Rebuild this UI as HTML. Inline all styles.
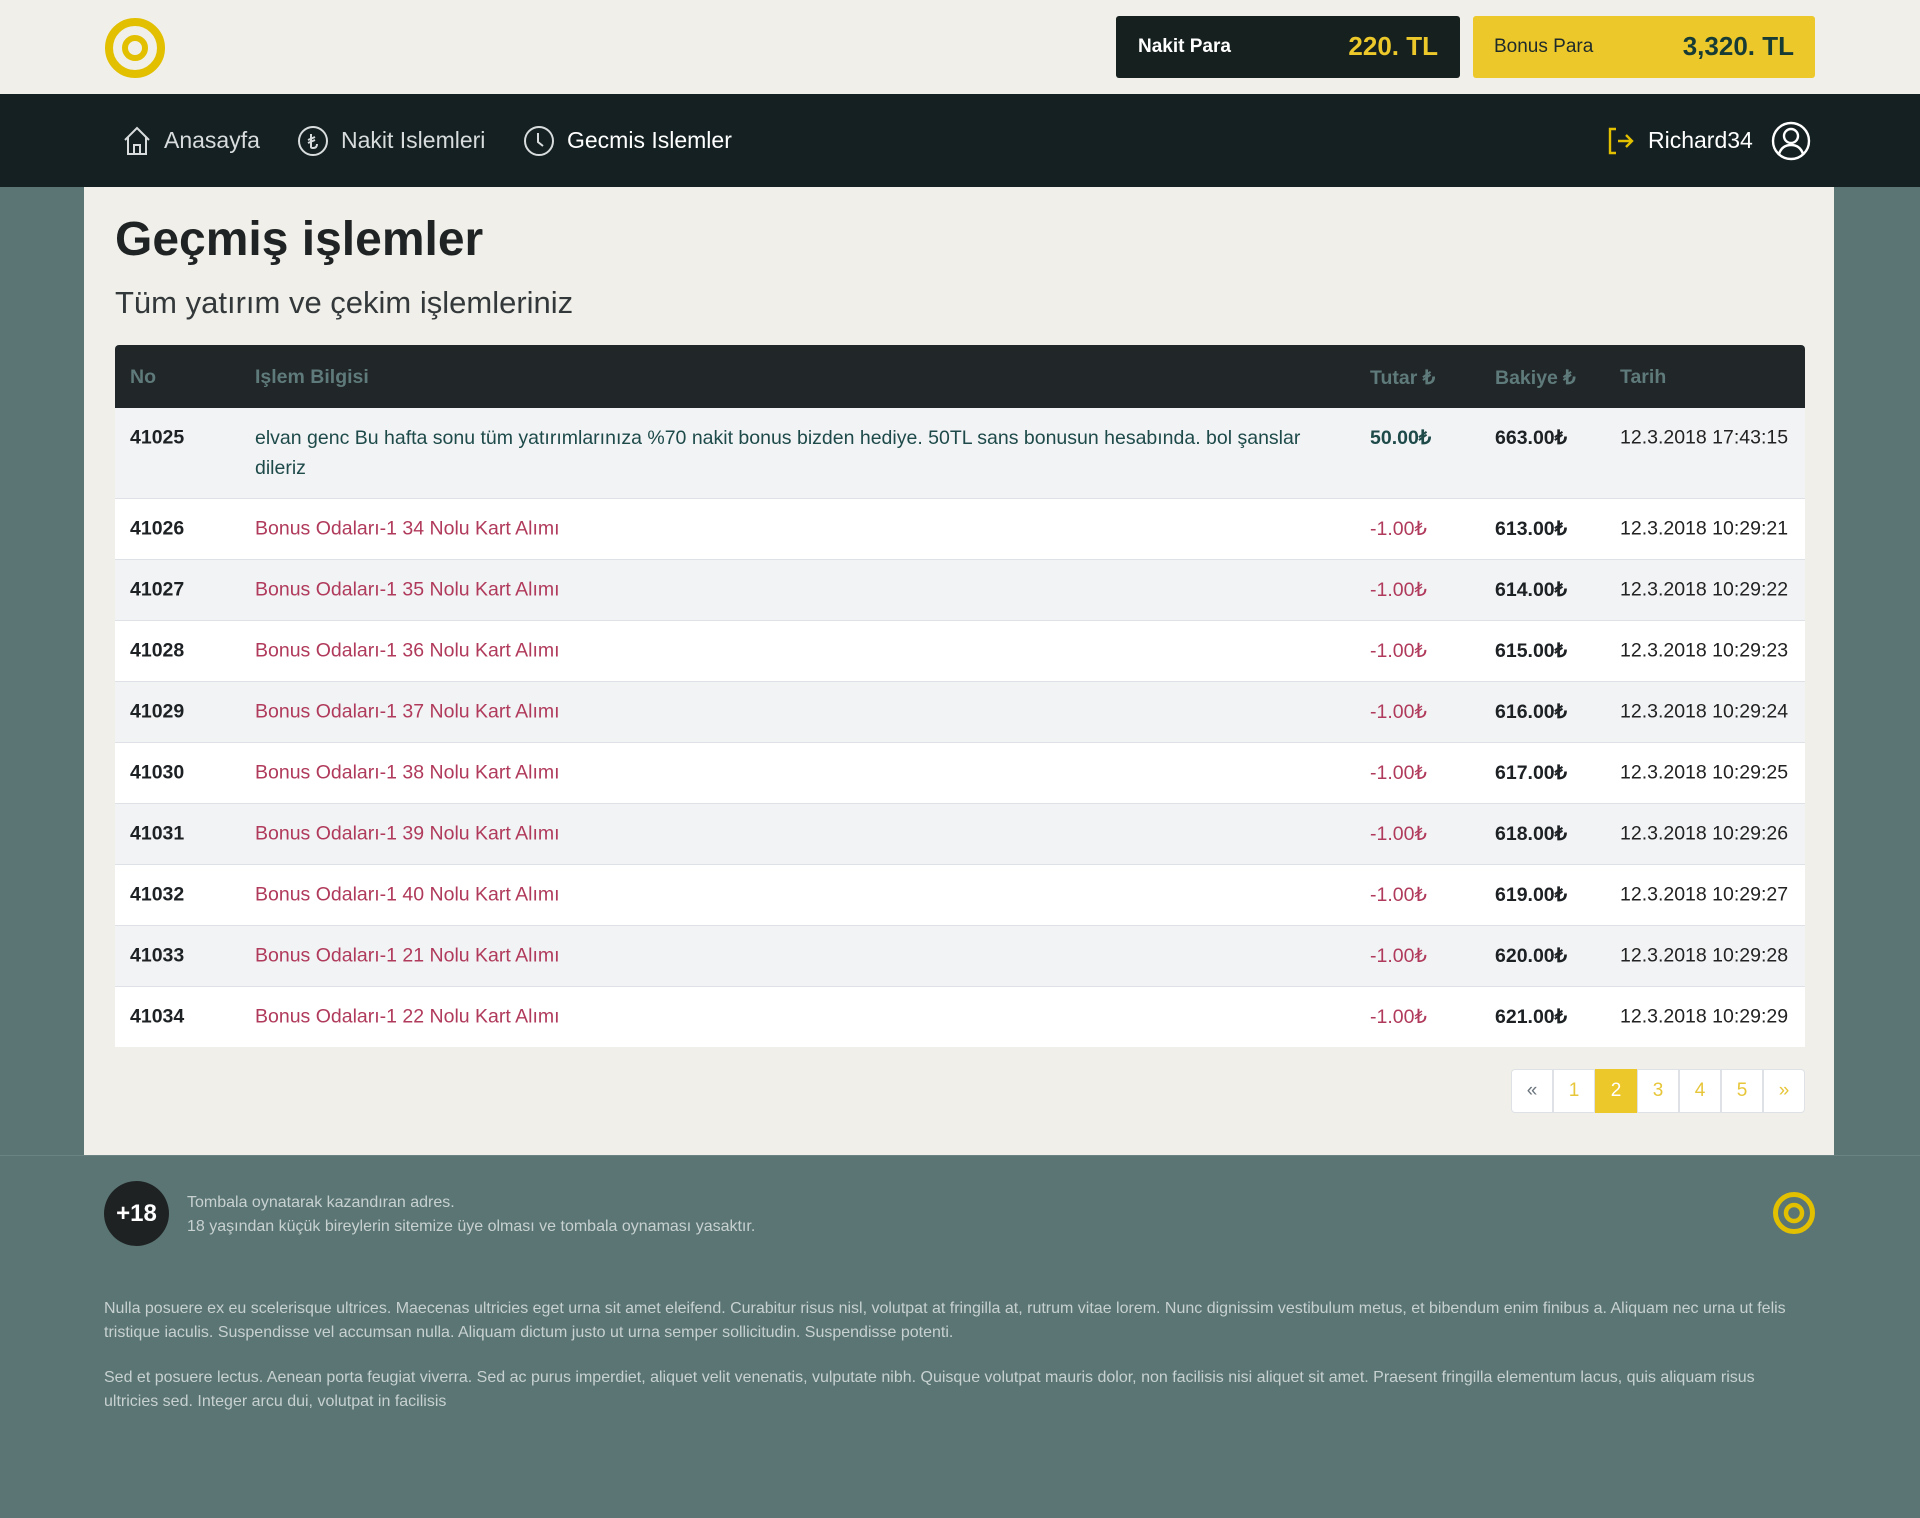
<!DOCTYPE html>
<html><head><meta charset="utf-8"><style>
*{margin:0;padding:0;box-sizing:border-box}
body{width:1920px;height:1518px;background:#5a7574;font-family:"Liberation Sans",sans-serif;position:relative;overflow:hidden}
.abs{position:absolute}
#hdr{left:0;top:0;width:1920px;height:94px;background:#f0efe9}
#nav{left:0;top:94px;width:1920px;height:93px;background:#142022}
.navi{position:absolute;top:0;height:93px;display:flex;align-items:center;color:#d8dcdc;font-size:23px}
.navi svg{margin-right:12px}
#main{left:84px;top:187px;width:1750px;height:968px;background:#f0efe9}
.row{position:absolute;left:115px;width:1690px;height:61px;border-top:1px solid #dee2e6;font-size:19.5px}
.row span{position:absolute;top:50%;transform:translateY(-50%);white-space:nowrap}
.c1{left:15px;font-weight:bold;color:#1d2124}
.c2{left:140px;color:#b03a5b}
.c3{left:1255px;color:#b03a5b}
.c4{left:1380px;font-weight:bold;color:#1d2124}
.c5{left:1505px;color:#222}
.pg{position:absolute;top:1069px;height:44px;width:42px;border:1px solid #dee2e6;background:#fff;color:#e7c63a;font-size:19px;display:flex;align-items:center;justify-content:center;margin-left:-1px}
.fp{position:absolute;left:104px;width:1710px;color:#c7d1d0;font-size:16px;line-height:24px}
</style></head><body>
<div id="hdr" class="abs">
  <svg class="abs" style="left:104px;top:17px" width="62" height="62" viewBox="0 0 62 62"><circle cx="31" cy="31" r="26" fill="none" stroke="#e2c000" stroke-width="8"/><circle cx="31" cy="31" r="10" fill="none" stroke="#e2c000" stroke-width="6"/></svg>
  <div class="abs" style="left:1116px;top:16px;width:344px;height:62px;background:#16201f;border-radius:3px;color:#fff">
    <span class="abs" style="left:22px;top:20px;font-size:19px;font-weight:bold">Nakit Para</span>
    <span class="abs" style="right:22px;top:15px;font-size:26px;font-weight:bold;color:#ecc82a">220. TL</span>
  </div>
  <div class="abs" style="left:1473px;top:16px;width:342px;height:62px;background:#ecc82a;border-radius:3px;color:#1f2b2b">
    <span class="abs" style="left:21px;top:20px;font-size:19px">Bonus Para</span>
    <span class="abs" style="right:21px;top:15px;font-size:26px;font-weight:bold;color:#173c36">3,320. TL</span>
  </div>
</div>
<div id="nav" class="abs">
  <div class="navi" style="left:122px"><svg width="30" height="32" viewBox="0 0 30 32" fill="none" stroke="#d8dcdc" stroke-width="2"><path d="M3 15 L15 3 L27 15 M6 12 V29 H24 V12 M12 29 V20 H18 V29"/></svg>Anasayfa</div>
  <div class="navi" style="left:297px"><svg width="32" height="32" viewBox="0 0 32 32" fill="none" stroke="#d8dcdc" stroke-width="2"><circle cx="16" cy="16" r="14"/><path d="M14 9 V22 Q14 23 16 23 Q20 23 20 19 M11 15 L18 12 M11 18 L18 15"/></svg>Nakit Islemleri</div>
  <div class="navi" style="left:523px;color:#fff"><svg width="32" height="32" viewBox="0 0 32 32" fill="none" stroke="#d8dcdc" stroke-width="2"><circle cx="16" cy="16" r="14"/><path d="M15 8 V17 L20 21"/></svg>Gecmis Islemler</div>
  <div class="navi" style="left:1606px;color:#fff"><svg width="30" height="30" viewBox="0 0 30 30" fill="none" stroke="#e2c000" stroke-width="2.4"><path d="M10 3 H4 V27 H10 M12 15 H26 M20 9 L26 15 L20 21"/></svg>Richard34
    <svg style="margin-left:18px" width="40" height="40" viewBox="0 0 40 40" fill="none" stroke="#fff" stroke-width="2.4"><circle cx="20" cy="20" r="18"/><circle cx="20" cy="15" r="7"/><path d="M8 33 Q11 24 20 24 Q29 24 32 33"/></svg></div>
</div>
<div id="main" class="abs"></div>
<div class="abs" style="left:115px;top:212px;font-size:48px;color:#1f2324;font-weight:bold">Geçmiş işlemler</div>
<div class="abs" style="left:115px;top:285px;font-size:31px;color:#33383a">Tüm yatırım ve çekim işlemleriniz</div>

<div class="abs" style="left:115px;top:345px;width:1690px;height:63px;background:#212629;border-radius:4px 4px 0 0;color:#5f7a7a;font-size:19.5px;font-weight:bold">
  <span class="abs" style="left:15px;top:21px">No</span>
  <span class="abs" style="left:140px;top:21px">Işlem Bilgisi</span>
  <span class="abs" style="left:1255px;top:21px">Tutar ₺</span>
  <span class="abs" style="left:1380px;top:21px">Bakiye ₺</span>
  <span class="abs" style="left:1505px;top:21px">Tarih</span>
</div>
<div class="row" style="top:408px;height:90px;background:#f2f3f5;border-top:none">
  <span class="c1" style="top:30px">41025</span>
  <span class="c2" style="top:15px;transform:none;color:#1e4a4a;line-height:30px">elvan genc Bu hafta sonu tüm yatırımlarınıza %70 nakit bonus bizden hediye. 50TL sans bonusun hesabında. bol şanslar<br>dileriz</span>
  <span class="c3" style="top:30px;font-weight:bold;color:#1e4a4a">50.00₺</span>
  <span class="c4" style="top:30px">663.00₺</span>
  <span class="c5" style="top:30px">12.3.2018 17:43:15</span>
</div>
<div class="row" style="top:498px;background:#fff"><span class="c1">41026</span><span class="c2">Bonus Odaları-1 34 Nolu Kart Alımı</span><span class="c3">-1.00₺</span><span class="c4">613.00₺</span><span class="c5">12.3.2018 10:29:21</span></div>
<div class="row" style="top:559px;background:#f2f3f5"><span class="c1">41027</span><span class="c2">Bonus Odaları-1 35 Nolu Kart Alımı</span><span class="c3">-1.00₺</span><span class="c4">614.00₺</span><span class="c5">12.3.2018 10:29:22</span></div>
<div class="row" style="top:620px;background:#fff"><span class="c1">41028</span><span class="c2">Bonus Odaları-1 36 Nolu Kart Alımı</span><span class="c3">-1.00₺</span><span class="c4">615.00₺</span><span class="c5">12.3.2018 10:29:23</span></div>
<div class="row" style="top:681px;background:#f2f3f5"><span class="c1">41029</span><span class="c2">Bonus Odaları-1 37 Nolu Kart Alımı</span><span class="c3">-1.00₺</span><span class="c4">616.00₺</span><span class="c5">12.3.2018 10:29:24</span></div>
<div class="row" style="top:742px;background:#fff"><span class="c1">41030</span><span class="c2">Bonus Odaları-1 38 Nolu Kart Alımı</span><span class="c3">-1.00₺</span><span class="c4">617.00₺</span><span class="c5">12.3.2018 10:29:25</span></div>
<div class="row" style="top:803px;background:#f2f3f5"><span class="c1">41031</span><span class="c2">Bonus Odaları-1 39 Nolu Kart Alımı</span><span class="c3">-1.00₺</span><span class="c4">618.00₺</span><span class="c5">12.3.2018 10:29:26</span></div>
<div class="row" style="top:864px;background:#fff"><span class="c1">41032</span><span class="c2">Bonus Odaları-1 40 Nolu Kart Alımı</span><span class="c3">-1.00₺</span><span class="c4">619.00₺</span><span class="c5">12.3.2018 10:29:27</span></div>
<div class="row" style="top:925px;background:#f2f3f5"><span class="c1">41033</span><span class="c2">Bonus Odaları-1 21 Nolu Kart Alımı</span><span class="c3">-1.00₺</span><span class="c4">620.00₺</span><span class="c5">12.3.2018 10:29:28</span></div>
<div class="row" style="top:986px;background:#fff"><span class="c1">41034</span><span class="c2">Bonus Odaları-1 22 Nolu Kart Alımı</span><span class="c3">-1.00₺</span><span class="c4">621.00₺</span><span class="c5">12.3.2018 10:29:29</span></div>

<div class="pg" style="left:1512px;color:#6c757d;border-radius:4px 0 0 4px">«</div>
<div class="pg" style="left:1554px">1</div>
<div class="pg" style="left:1596px;background:#ecc82a;border-color:#ecc82a;color:#fff">2</div>
<div class="pg" style="left:1638px">3</div>
<div class="pg" style="left:1680px">4</div>
<div class="pg" style="left:1722px">5</div>
<div class="pg" style="left:1764px;border-radius:0 4px 4px 0">»</div>

<div class="abs" style="left:0;top:1155px;width:1920px;height:1px;background:#6b8483"></div>
<div class="abs" style="left:104px;top:1181px;width:65px;height:65px;border-radius:50%;background:#1f2223;color:#fff;font-weight:bold;font-size:24px;display:flex;align-items:center;justify-content:center">+18</div>
<div class="abs" style="left:187px;top:1191px;color:#c7d1d0;font-size:16px;line-height:24px">Tombala oynatarak kazandıran adres.<br>18 yaşından küçük bireylerin sitemize üye olması ve tombala oynaması yasaktır.</div>
<svg class="abs" style="left:1772px;top:1191px" width="44" height="44" viewBox="0 0 44 44"><circle cx="22" cy="22" r="18.5" fill="none" stroke="#e2c000" stroke-width="5"/><circle cx="22" cy="22" r="8" fill="none" stroke="#e2c000" stroke-width="4.5"/></svg>
<div class="fp" style="top:1297px">Nulla posuere ex eu scelerisque ultrices. Maecenas ultricies eget urna sit amet eleifend. Curabitur risus nisl, volutpat at fringilla at, rutrum vitae lorem. Nunc dignissim vestibulum metus, et bibendum enim finibus a. Aliquam nec urna ut felis<br>tristique iaculis. Suspendisse vel accumsan nulla. Aliquam dictum justo ut urna semper sollicitudin. Suspendisse potenti.</div>
<div class="fp" style="top:1366px">Sed et posuere lectus. Aenean porta feugiat viverra. Sed ac purus imperdiet, aliquet velit venenatis, vulputate nibh. Quisque volutpat mauris dolor, non facilisis nisi aliquet sit amet. Praesent fringilla elementum lacus, quis aliquam risus<br>ultricies sed. Integer arcu dui, volutpat in facilisis</div>
</body></html>
